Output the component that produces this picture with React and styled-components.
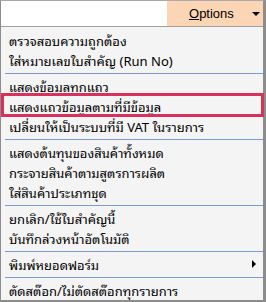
import React from "react";
import styled, { createGlobalStyle } from "styled-components";

const Global = createGlobalStyle`
  html, body { margin: 0; padding: 0; background: #ffffff; }
  * { box-sizing: border-box; }
`;

const Frame = styled.div`
  width: 266px;
  height: 302px;
  border-top: 1px solid #a9a9a9;
  border-left: 1px solid #8c8c8c;
  border-right: 3px solid #8c8c8c;
  border-bottom: 2px solid #8c8c8c;
  display: flex;
  flex-direction: column;
  font-family: Tahoma, "Noto Sans Thai Looped", "Noto Sans Thai", "Liberation Sans", sans-serif;
  font-size: 13px;
  color: #000;
`;

const TopBar = styled.div`
  height: 26px;
  flex: none;
  display: flex;
  justify-content: flex-end;
  background: #ffffff;
  border-bottom: 1px solid #a0a0a0;
`;

const OptionsButton = styled.div`
  width: 96px;
  height: 100%;
  background: #fcd5b4;
  display: flex;
  align-items: center;
  padding-left: 22px;
  font-family: "Liberation Sans", sans-serif;
  font-size: 13px;
`;

const Underlined = styled.span`
  text-decoration: underline;
`;

const DownArrow = styled.span`
  margin-left: auto;
  margin-right: 3px;
  width: 0;
  height: 0;
  border-left: 4px solid transparent;
  border-right: 4px solid transparent;
  border-top: 4px solid #000;
`;

const Menu = styled.div`
  flex: 1;
  background: #f4f4f4;
  padding-top: 3px;
  display: flex;
  flex-direction: column;
`;

const Item = styled.div`
  height: 20px;
  flex: none;
  display: flex;
  align-items: center;
  padding-left: 8px;
  padding-right: 8px;
  position: relative;
  white-space: nowrap;

  ${(p) =>
    p.$highlight &&
    `
    &::after {
      content: "";
      position: absolute;
      left: 0;
      right: -1px;
      top: -3px;
      bottom: -1px;
      border: 3px solid #d8315b;
      pointer-events: none;
    }
  `}
`;

const SubArrow = styled.span`
  margin-left: auto;
  margin-right: -1px;
  width: 0;
  height: 0;
  border-top: 4px solid transparent;
  border-bottom: 4px solid transparent;
  border-left: 4px solid #000;
`;

const Separator = styled.div`
  height: 6px;
  flex: none;
  display: flex;
  align-items: center;
  padding-left: 4px;

  &::after {
    content: "";
    flex: 1;
    height: 1px;
    background: #7a9bd8;
  }
`;

const groups = [
  ["ตรวจสอบความถูกต้อง", "ใส่หมายเลขใบสำคัญ (Run No)"],
  ["แสดงข้อมูลทุกแถว", "แสดงแถวข้อมูลตามที่มีข้อมูล", "เปลี่ยนให้เป็นระบบที่มี VAT ในรายการ"],
  ["แสดงต้นทุนของสินค้าทั้งหมด", "กระจายสินค้าตามสูตรการผลิต", "ใส่สินค้าประเภทชุด"],
  ["ยกเลิก/ใช้ใบสำคัญนี้", "บันทึกล่วงหน้าอัตโนมัติ"],
  ["พิมพ์หยอดฟอร์ม"],
  ["ตัดสต๊อก/ไม่ตัดสต๊อกทุกรายการ"],
];

export default function App() {
  return (
    <>
      <Global />
      <Frame>
        <TopBar>
          <OptionsButton>
            <span>
              <Underlined>O</Underlined>ptions
            </span>
            <DownArrow />
          </OptionsButton>
        </TopBar>
        <Menu>
          {groups.map((g, gi) => (
            <React.Fragment key={gi}>
              {gi > 0 && <Separator />}
              {g.map((t) => (
                <Item key={t} $highlight={t === "แสดงแถวข้อมูลตามที่มีข้อมูล"}>
                  {t}
                  {t === "พิมพ์หยอดฟอร์ม" && <SubArrow />}
                </Item>
              ))}
            </React.Fragment>
          ))}
        </Menu>
      </Frame>
    </>
  );
}
